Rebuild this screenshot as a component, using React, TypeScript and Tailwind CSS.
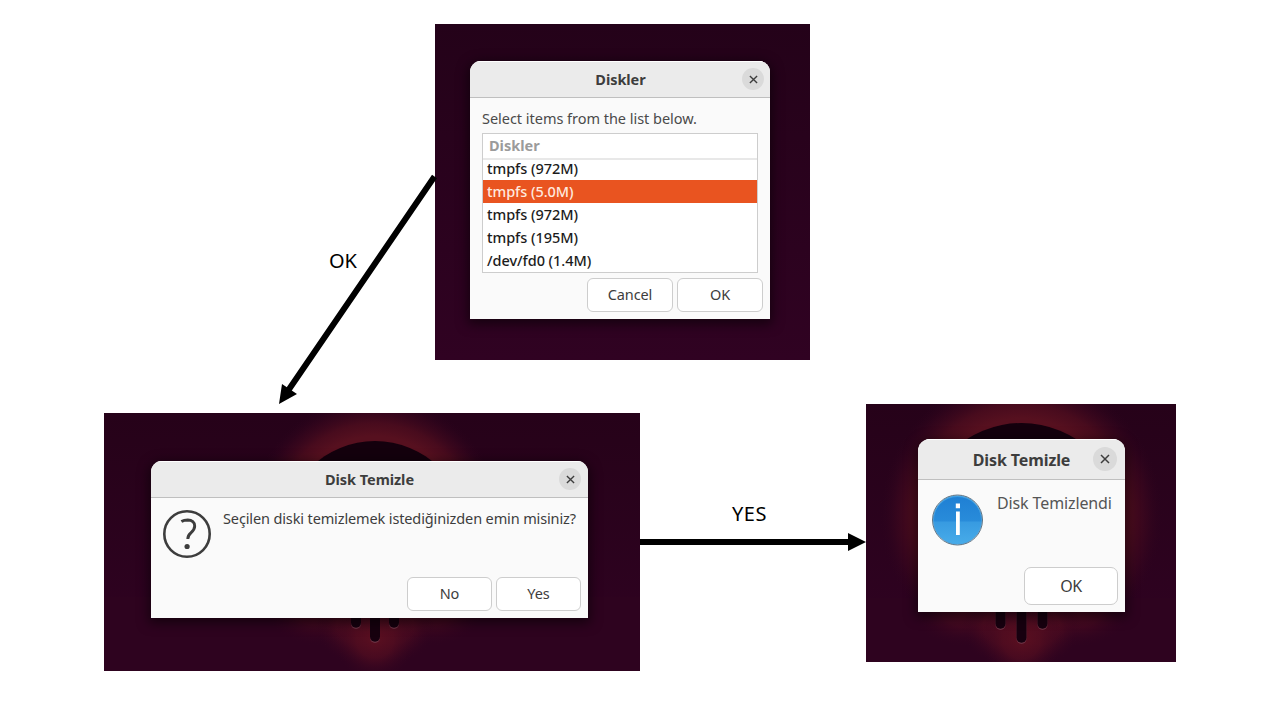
import type { ReactNode } from "react";

function CloseButton({ large = false }: { large?: boolean }) {
  return (
    <button
      aria-label="Close"
      className={`flex items-center justify-center rounded-full bg-[#dadada] ${large ? "size-6" : "size-[22px]"}`}
    >
      <svg viewBox="0 0 10 10" className={large ? "size-[10px]" : "size-[9px]"} fill="none" stroke="#3d3d3d" strokeWidth="1.5">
        <path d="M1 1l8 8M9 1L1 9" />
      </svg>
    </button>
  );
}

function ActionButton({ children, className }: { children: ReactNode; className: string }) {
  return (
    <button className={`flex items-center justify-center border border-[#cdcdcd] bg-white text-[#3d3d3d] ${className}`}>
      {children}
    </button>
  );
}

function TitleBar({ title, className, titleClass, large = false }: { title: string; className: string; titleClass: string; large?: boolean }) {
  return (
    <header className={`grid shrink-0 items-center border-t border-b border-t-white border-b-[#bfbfbf] bg-[#ebebeb] ${className}`}>
      <span />
      <h2 className={`text-center font-bold whitespace-nowrap text-[#3d3d3d] ${titleClass}`}>{title}</h2>
      <div className="flex justify-end pb-px">
        <CloseButton large={large} />
      </div>
    </header>
  );
}

function Glow({ width, height, cx, top, r, drips, id }: { width: number; height: number; cx: number; top: number; r: number; drips: { x: number; y: number }[]; id: string }) {
  const cy = top + r;
  const bottom = drips[1].y;
  return (
    <svg className="absolute inset-0" width={width} height={height} viewBox={`0 0 ${width} ${height}`}>
      <defs>
        <radialGradient id={`${id}-halo`}>
          <stop offset="0" stopColor="#56101f" />
          <stop offset="0.68" stopColor="#56101f" />
          <stop offset="0.78" stopColor="#4e0d1e" stopOpacity="0.85" />
          <stop offset="0.89" stopColor="#3e081e" stopOpacity="0.5" />
          <stop offset="1" stopColor="#2c041d" stopOpacity="0" />
        </radialGradient>
        <radialGradient id={`${id}-spot`}>
          <stop offset="0" stopColor="#5e1020" />
          <stop offset="0.45" stopColor="#520d20" stopOpacity="0.8" />
          <stop offset="1" stopColor="#30031f" stopOpacity="0" />
        </radialGradient>
      </defs>
      <ellipse cx={cx} cy={cy - 8} rx={r * 1.4} ry={r * 1.42} fill={`url(#${id}-halo)`} />
      <rect x="0" y={bottom - 45} width={width} height="100" fill="#2e031f" />
      <ellipse cx={cx - 56} cy={bottom - 32} rx="54" ry="36" fill={`url(#${id}-spot)`} opacity="0.6" />
      <ellipse cx={cx + 56} cy={bottom - 32} rx="54" ry="36" fill={`url(#${id}-spot)`} opacity="0.6" />
      <ellipse cx={cx - 20} cy={bottom - 16} rx="40" ry="38" fill={`url(#${id}-spot)`} opacity="0.8" />
      <ellipse cx={cx + 20} cy={bottom - 16} rx="40" ry="38" fill={`url(#${id}-spot)`} opacity="0.8" />
      <ellipse cx={cx} cy={bottom - 3} rx="42" ry="42" fill={`url(#${id}-spot)`} opacity="0.9" />
      <path d={`M${cx - r} ${cy}a${r} ${r} 0 0 1 ${r * 2} 0Z`} fill="#14000d" />
      {drips.map((d) => (
        <g key={d.x} strokeLinecap="round" strokeWidth="10">
          <path d={`M${d.x} ${bottom - 45}V${d.y - 4}`} stroke="#6b3142" />
          <path d={`M${d.x} ${bottom - 45}V${d.y - 5.3}`} stroke="#17000f" />
        </g>
      ))}
    </svg>
  );
}

const disks = [
  { name: "tmpfs (972M)", selected: false, cls: "h-5 pb-0.5" },
  { name: "tmpfs (5.0M)", selected: true, cls: "h-[23px]" },
  { name: "tmpfs (972M)", selected: false, cls: "h-[23px]" },
  { name: "tmpfs (195M)", selected: false, cls: "h-[23px]" },
  { name: "/dev/fd0 (1.4M)", selected: false, cls: "h-[23px]" },
];

function DiskListScreen() {
  return (
    <section className="absolute top-6 left-[435px] h-[336px] w-[375px] bg-linear-to-b from-[#240219] to-[#300222] pt-[37px] pl-[35px]">
      <div className="flex h-[258px] w-[300px] flex-col overflow-hidden rounded-t-[11px] bg-[#fafafa] shadow-[0_3px_12px_2px_rgba(0,0,0,0.55)]">
        <TitleBar title="Diskler" className="h-[37px] grid-cols-[24px_1fr_24px] pr-1.5 pl-[7px]" titleClass="text-[14.5px] tracking-[-0.05px]" />
        <div className="flex flex-col px-3 pt-[10px] text-[14.5px]">
          <p className="h-[25px] leading-[21px] tracking-[-0.03px] whitespace-nowrap text-[#4a4a4a]">Select items from the list below.</p>
          <div className="h-[140px] w-[276px] border border-[#cdcdcd] bg-white">
            <div className="flex h-[26px] items-center border-b-2 border-[#e8e8e8] pl-1.5 font-bold text-[#9b9b9b]">Diskler</div>
            <ul>
              {disks.map((d, i) => (
                <li
                  key={i}
                  className={`flex items-center pl-1 font-medium tracking-[-0.05px] whitespace-nowrap ${d.cls} ${d.selected ? "bg-[#e95420] text-[#ffe9df]" : "text-[#1c1c1c]"}`}
                >
                  {d.name}
                </li>
              ))}
            </ul>
          </div>
        </div>
        <div className="flex justify-end gap-1 pt-[5px] pr-[7px] text-[14.5px] tracking-[-0.1px]">
          <ActionButton className="h-[34px] w-[86px] rounded-md">Cancel</ActionButton>
          <ActionButton className="h-[34px] w-[86px] rounded-md">OK</ActionButton>
        </div>
      </div>
    </section>
  );
}

function ConfirmScreen() {
  return (
    <section className="absolute top-[413px] left-[104px] h-[258px] w-[536px] bg-linear-to-b from-[#260219] to-[#300222]">
      <Glow
        id="confirm"
        width={536}
        height={258}
        cx={271}
        top={28}
        r={91}
        drips={[{ x: 252, y: 215 }, { x: 271, y: 229 }, { x: 290, y: 215 }]}
      />
      <div className="relative mt-12 ml-[47px] flex h-[157px] w-[437px] flex-col overflow-hidden rounded-t-[11px] bg-[#fafafa] shadow-[0_3px_12px_2px_rgba(0,0,0,0.55)]">
        <TitleBar title="Disk Temizle" className="h-[37px] grid-cols-[24px_1fr_24px] px-[7px]" titleClass="text-[14.5px] tracking-[-0.05px]" />
        <div className="flex h-[79px] gap-3 pt-3 pl-3">
          <svg viewBox="0 0 48 48" className="size-12" fill="none" stroke="#3d3d3d">
            <circle cx="24" cy="24" r="22.7" strokeWidth="2.6" />
            <path d="M18.4 11.6C20 10.6 22 10 24.8 10c4.1.1 6.9 2.4 6.9 6 0 3.3-1.7 5-3.8 6.8-2.1 1.8-3.1 3.2-3.1 6.2" strokeWidth="2.9" />
            <circle cx="24.1" cy="36.5" r="2.6" fill="#3d3d3d" stroke="none" />
          </svg>
          <p className="-mt-[2px] text-[14.5px] leading-[21px] tracking-[-0.13px] whitespace-nowrap text-[#3d3d3d]">
            Seçilen diski temizlemek istediğinizden emin misiniz?
          </p>
        </div>
        <div className="flex justify-end gap-1 pr-[7px] text-[14.5px] tracking-[-0.1px]">
          <ActionButton className="h-[34px] w-[85px] rounded-md">No</ActionButton>
          <ActionButton className="h-[34px] w-[85px] rounded-md">Yes</ActionButton>
        </div>
      </div>
    </section>
  );
}

function DoneScreen() {
  return (
    <section className="absolute top-[404px] left-[866px] h-[258px] w-[310px] bg-linear-to-b from-[#260219] to-[#300222]">
      <Glow
        id="done"
        width={310}
        height={258}
        cx={155.5}
        top={19}
        r={101}
        drips={[{ x: 134.5, y: 225 }, { x: 155.5, y: 239 }, { x: 176.5, y: 225 }]}
      />
      <div className="relative mt-[35px] ml-[52px] flex h-[173px] w-[207px] flex-col overflow-hidden rounded-t-xl bg-[#fafafa] shadow-[0_3px_12px_2px_rgba(0,0,0,0.55)]">
        <TitleBar large title="Disk Temizle" className="h-[41px] grid-cols-[26px_1fr_26px] px-2" titleClass="text-[16px] tracking-[-0.1px]" />
        <div className="flex h-[87px] gap-[13px] pt-[14px] pl-[14px]">
          <svg viewBox="0 0 52 52" className="size-[52px]">
            <defs>
              <linearGradient id="info-top" x2="0" y2="1">
                <stop stopColor="#1f80d4" />
                <stop offset="1" stopColor="#298cda" />
              </linearGradient>
              <linearGradient id="info-bottom" x2="0" y2="1">
                <stop offset="0.5" stopColor="#3699e0" />
                <stop offset="1" stopColor="#48ace9" />
              </linearGradient>
            </defs>
            <circle cx="25.5" cy="26" r="24.5" fill="url(#info-bottom)" />
            <path d="M1 27.5a24.5 24.5 0 1 1 49 0Z" fill="url(#info-top)" />
            <circle cx="25.5" cy="26" r="24" fill="none" stroke="#49a4e3" strokeWidth="0.8" />
            <circle cx="25.5" cy="26" r="25" fill="none" stroke="#5c7385" strokeWidth="1" />
            <path d="M23.8 9.5h4.2v4.8h-4.2zM24 17.5h3.8V41H24z" fill="#fff" />
          </svg>
          <p className="-mt-[2px] text-[16px] leading-[22px] tracking-[-0.12px] whitespace-nowrap text-[#555]">Disk Temizlendi</p>
        </div>
        <div className="flex justify-end pr-[7px] text-[16px]">
          <ActionButton className="h-[38px] w-[94px] rounded-[7px] tracking-[-0.4px]">OK</ActionButton>
        </div>
      </div>
    </section>
  );
}

export default function App() {
  return (
    <main className="relative h-[720px] w-[1280px] overflow-hidden bg-white font-['Noto_Sans',sans-serif]">
      <DiskListScreen />
      <ConfirmScreen />
      <DoneScreen />
      <svg className="absolute inset-0" width="1280" height="720" viewBox="0 0 1280 720">
        <path d="M434.5 176.5L287.5 391.5M640 542H850" stroke="#000" strokeWidth="6" />
        <path d="M279 404L282 384L297 394ZM866 542L848 533V551Z" />
      </svg>
      <span className="absolute top-[247px] left-[329px] text-[20px] leading-[28px] tracking-[-0.2px] text-black">OK</span>
      <span className="absolute top-[500px] left-[732px] text-[20px] leading-[28px] tracking-[0.5px] text-black">YES</span>
    </main>
  );
}
